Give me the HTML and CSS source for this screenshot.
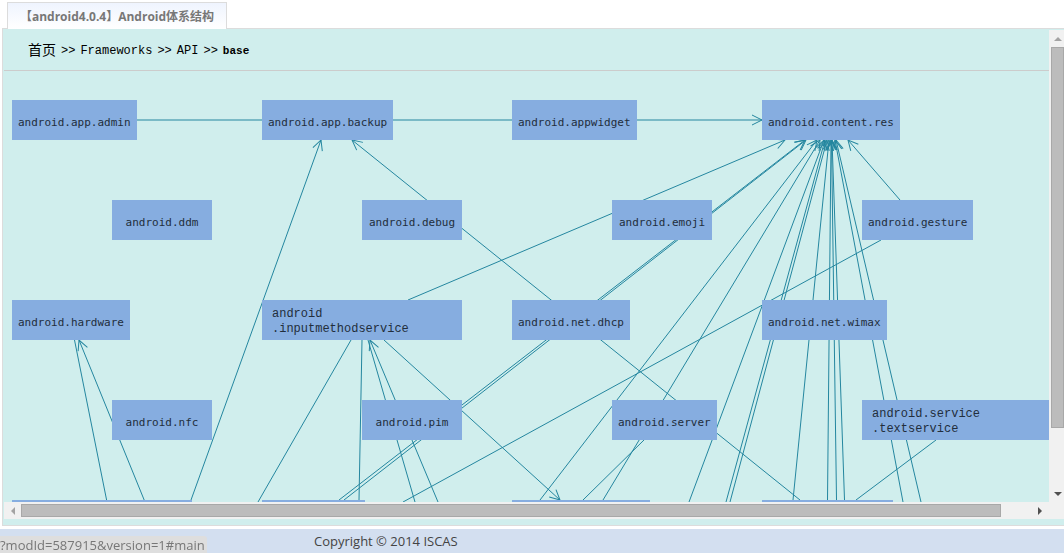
FILE: index.html
```html
<!DOCTYPE html>
<html lang="zh-CN">
<head>
<meta charset="utf-8">
<title>Android体系结构</title>
<link rel="stylesheet" href="styles.css">
</head>
<body>
<header class="tabs"><button class="tab" type="button">【android4.0.4】Android体系结构</button></header>
<main class="panel">
  <div class="view">
    <div class="content">
      <nav class="crumbs" aria-label="Breadcrumb">
        <a class="home" href="#home">首页</a><span>&gt;&gt;</span><a href="#frameworks">Frameworks</a><span>&gt;&gt;</span><a href="#api">API</a><span>&gt;&gt;</span><strong>base</strong>
      </nav>
      <div class="canvas">
        <svg class="edges" width="1196" height="600" viewBox="4 71 1196 600" aria-hidden="true">
          <defs>
            <marker id="arrow" viewBox="0 0 12 12" refX="11" refY="6" markerWidth="12" markerHeight="12" markerUnits="userSpaceOnUse" orient="auto"><path d="M1 1L11 6L1 11"/></marker>
          </defs>
          <g class="arrows">
            <path d="M136 120H762"/>
            <path d="M191 500L321 140"/>
            <path d="M800 500L352 140"/>
            <path d="M408 300L785 140"/>
            <path d="M339 500L805 140"/>
            <path d="M344 500L806 140"/>
            <path d="M540 500L817 140"/>
            <path d="M603 500L820 140"/>
            <path d="M689 502L824 140"/>
            <path d="M726 502L825 140"/>
            <path d="M730 502L827 140"/>
            <path d="M793 500L829 140"/>
            <path d="M827.5 500L831 140"/>
            <path d="M836.5 500L831.5 140"/>
            <path d="M844.5 500L832 140"/>
            <path d="M903 502L835 140"/>
            <path d="M921 502L836 140"/>
            <path d="M900 200L848 140"/>
            <path d="M145 502L79 340"/>
            <path d="M438 502L370 340"/>
            <path d="M384 340L560 500"/>
          </g>
          <path d="M881 240L403 502M74.500 340L107 502M351 340L258 502M362 340L359 500M368 340L415 502M644 440L583 500M936 440L856 500"/>
        </svg>
        <div class="node n1">android.app.admin</div>
        <div class="node n2">android.app.backup</div>
        <div class="node n3">android.appwidget</div>
        <div class="node n4">android.content.res</div>
        <div class="node n5">android.ddm</div>
        <div class="node n6">android.debug</div>
        <div class="node n7">android.emoji</div>
        <div class="node n8">android.gesture</div>
        <div class="node n9">android.hardware</div>
        <div class="node n10 wide">android<br>.inputmethodservice</div>
        <div class="node n11">android.net.dhcp</div>
        <div class="node n12">android.net.wimax</div>
        <div class="node n13">android.nfc</div>
        <div class="node n14">android.pim</div>
        <div class="node n15">android.server</div>
        <div class="node n16 wide">android.service<br>.textservice</div>
        <div class="node n17"></div>
        <div class="node n18"></div>
        <div class="node n19"></div>
        <div class="node n20"></div>
      </div>
    </div>
    <div class="vbar">
      <button type="button" class="arrow faded" aria-label="Scroll up"><svg width="8" height="4" viewBox="0 0 8 4"><path d="M0 4L4 0L8 4Z"/></svg></button>
      <div class="track"><div class="thumb"></div></div>
      <button type="button" class="arrow" aria-label="Scroll down"><svg width="8" height="4" viewBox="0 0 8 4"><path d="M0 0H8L4 4Z"/></svg></button>
    </div>
    <div class="hbar">
      <button type="button" class="arrow faded" aria-label="Scroll left"><svg width="4" height="8" viewBox="0 0 4 8"><path d="M4 0V8L0 4Z"/></svg></button>
      <div class="track"><div class="thumb"></div></div>
      <button type="button" class="arrow" aria-label="Scroll right"><svg width="4" height="8" viewBox="0 0 4 8"><path d="M0 0V8L4 4Z"/></svg></button>
    </div>
  </div>
</main>
<footer class="footer">Copyright © 2014 ISCAS</footer>
<div class="status">?modId=587915&amp;version=1#main</div>
</body>
</html>
```
FILE: styles.css
```css
* { box-sizing: border-box; }
body {
  margin: 0;
  height: 100vh;
  display: flex;
  flex-direction: column;
  overflow: hidden;
  background: #fff;
  font-family: "Open Sans", "Noto Sans CJK SC", sans-serif;
}
button { padding: 0; border: 0; background: none; font: inherit; }
a { color: inherit; text-decoration: none; }

.tabs { display: flex; padding: 2px 7px 0; }
.tab {
  position: relative;
  z-index: 1;
  width: 220px;
  height: 27px;
  margin-bottom: -1px;
  border: 1px solid #dcdcdc;
  border-bottom: 0;
  background: linear-gradient(#eff4fe, #fff);
  color: #777;
  font-size: 12px;
  font-weight: 700;
  white-space: nowrap;
}
.panel {
  flex: 1;
  min-height: 0;
  margin-left: 2px;
  padding: 1px 0 6px 1px;
  border: 1px solid #dcdcdc;
  border-right: 0;
  background: #d0eeed;
}
.view {
  height: 100%;
  display: grid;
  grid-template: minmax(0, 1fr) 17px / minmax(0, 1fr) 15px;
  background: #f1f1f1;
}
.content {
  display: flex;
  flex-direction: column;
  overflow: hidden;
  background: #d0eeed;
}
.crumbs {
  flex: none;
  display: flex;
  align-items: center;
  gap: 5px;
  height: 41px;
  padding: 2px 0 0 24px;
  border-bottom: 1px solid #ccc;
  color: #000;
  font-family: "Liberation Mono", "Noto Sans CJK SC", monospace;
  font-size: 12px;
  line-height: 16px;
}
.crumbs .home { font-size: 14px; }
.crumbs strong { font-size: 11px; }

.canvas { position: relative; flex: 1; overflow: hidden; }
.edges { display: block; fill: none; stroke: #24869f; stroke-width: 1; }
.arrows path { marker-end: url(#arrow); }

.node {
  position: absolute;
  min-width: 100px;
  height: 40px;
  padding: 4px 6px 0;
  background: #86ade0;
  color: #222e3c;
  font: 11px/38px "DejaVu Sans Mono", monospace;
  text-align: center;
  white-space: nowrap;
}
.wide {
  width: 200px;
  padding: 7px 10px 0;
  font-size: 12px;
  line-height: 15px;
  font-family: "Liberation Mono", monospace;
  text-align: left;
}
.n1, .n2, .n3, .n4 { top: 29px; }
.n5, .n6, .n7, .n8 { top: 129px; }
.n9, .n10, .n11, .n12 { top: 229px; }
.n13, .n14, .n15, .n16 { top: 329px; }
.n17, .n18, .n19, .n20 { top: 429px; }
.n1, .n9, .n17 { left: 8px; }
.n5, .n13 { left: 108px; }
.n2, .n10, .n18 { left: 258px; }
.n6, .n14 { left: 358px; }
.n3, .n11, .n19 { left: 508px; }
.n7, .n15 { left: 608px; }
.n4, .n12, .n20 { left: 758px; }
.n8, .n16 { left: 858px; }
.n17 { width: 180px; }
.n18 { width: 103px; }
.n19 { width: 138px; }
.n20 { width: 131px; }

.vbar { display: flex; flex-direction: column; }
.hbar { grid-column: 1 / -1; display: flex; padding-right: 16px; }
.arrow {
  flex: none;
  display: flex;
  align-items: center;
  justify-content: center;
  width: 17px;
  height: 17px;
  fill: #505050;
}
.faded { fill: #a3a3a3; }
.track { flex: 1; }
.thumb { border: 1px solid #a8a8a8; background: #bcbcbc; }
.vbar .thumb { height: 87%; margin-left: 2px; }
.hbar .track { padding: 2px 0; }
.hbar .thumb { width: 97%; height: 13px; }

.footer {
  height: 24px;
  flex: none;
  margin-top: 3px;
  padding-left: 314px;
  background: #d3dff0;
  color: #444;
  font-size: 13px;
  line-height: 24px;
}
.status {
  position: fixed;
  left: 0;
  bottom: 0;
  padding: 2px 2px 0 0;
  border-top-right-radius: 3px;
  background: #dedede;
  color: #777;
  font-size: 13px;
  line-height: 15px;
}
```
